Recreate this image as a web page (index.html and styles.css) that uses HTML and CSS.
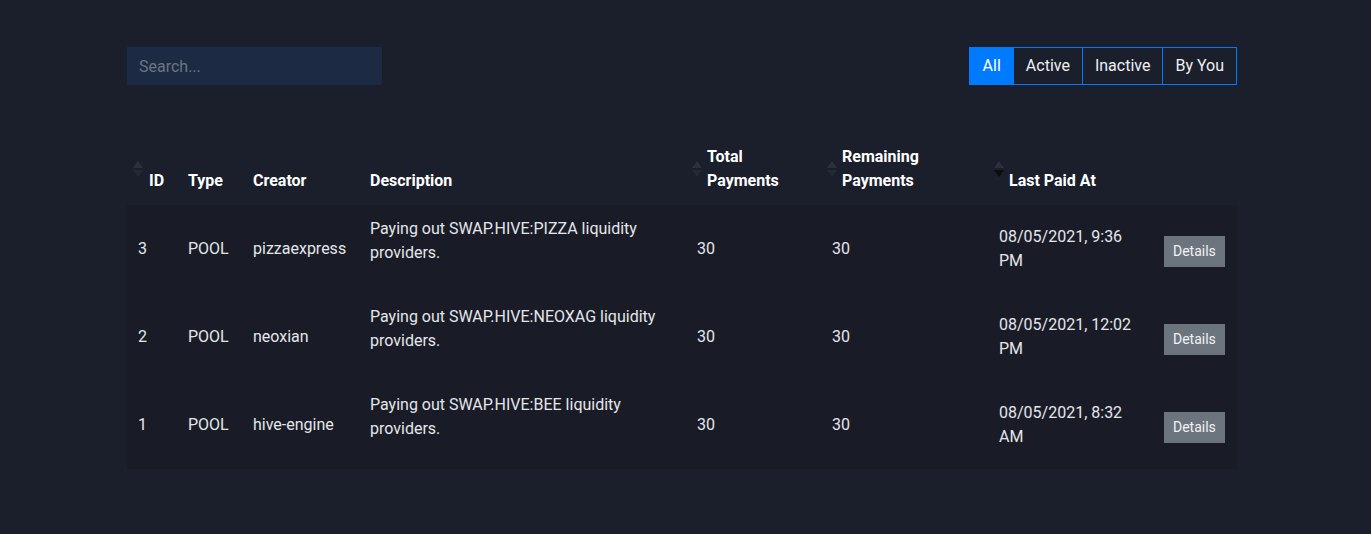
FILE: index.html
```html
<!DOCTYPE html>
<html lang="en">
<head>
<meta charset="utf-8">
<title>Distributions</title>
<link rel="stylesheet" href="styles.css">
</head>
<body>
<div class="page">
  <div class="toolbar">
    <input class="search" type="text" placeholder="Search...">
    <div class="btn-group">
      <button class="filter active">All</button>
      <button class="filter">Active</button>
      <button class="filter">Inactive</button>
      <button class="filter">By You</button>
    </div>
  </div>

  <table class="table">
    <colgroup>
      <col class="c-id"><col class="c-type"><col class="c-creator"><col class="c-desc">
      <col class="c-total"><col class="c-remain"><col class="c-last"><col class="c-action">
    </colgroup>
    <thead>
      <tr>
        <th class="sortable first"><svg class="sort" viewBox="0 0 10 16"><path class="up" d="M5 0 L10 7 L0 7 Z"/><path class="down" d="M0 9 L10 9 L5 16 Z"/></svg>ID</th>
        <th>Type</th>
        <th>Creator</th>
        <th>Description</th>
        <th class="sortable"><svg class="sort" viewBox="0 0 10 16"><path class="up" d="M5 0 L10 7 L0 7 Z"/><path class="down" d="M0 9 L10 9 L5 16 Z"/></svg>Total Payments</th>
        <th class="sortable"><svg class="sort" viewBox="0 0 10 16"><path class="up" d="M5 0 L10 7 L0 7 Z"/><path class="down" d="M0 9 L10 9 L5 16 Z"/></svg>Remaining Payments</th>
        <th class="sortable"><svg class="sort" viewBox="0 0 10 16"><path class="up" d="M5 0 L10 7 L0 7 Z"/><path class="down on" d="M0 9 L10 9 L5 16 Z"/></svg>Last Paid At</th>
        <th></th>
      </tr>
    </thead>
    <tbody>
      <tr>
        <td>3</td><td>POOL</td><td>pizzaexpress</td>
        <td><p class="desc">Paying out SWAP.HIVE:PIZZA liquidity providers.</p></td>
        <td>30</td><td>30</td><td>08/05/2021, 9:36 PM</td>
        <td><button class="details">Details</button></td>
      </tr>
      <tr>
        <td>2</td><td>POOL</td><td>neoxian</td>
        <td><p class="desc">Paying out SWAP.HIVE:NEOXAG liquidity providers.</p></td>
        <td>30</td><td>30</td><td>08/05/2021, 12:02 PM</td>
        <td><button class="details">Details</button></td>
      </tr>
      <tr>
        <td>1</td><td>POOL</td><td>hive-engine</td>
        <td><p class="desc">Paying out SWAP.HIVE:BEE liquidity providers.</p></td>
        <td>30</td><td>30</td><td>08/05/2021, 8:32 AM</td>
        <td><button class="details">Details</button></td>
      </tr>
    </tbody>
  </table>
</div>
</body>
</html>
```

FILE: styles.css
```css
* { box-sizing: border-box; }

html, body {
  margin: 0;
  background: #1b1f2b;
  color: #e4e6ea;
  font-family: Roboto, "Liberation Sans", Arial, sans-serif;
  font-size: 16px;
  line-height: 24px;
}

.page {
  width: 1237px;
  padding: 47px 0 0 127px;
}

.toolbar {
  display: flex;
  justify-content: space-between;
  align-items: flex-start;
  margin-bottom: 47px;
}

.search {
  width: 255px;
  height: 38px;
  border: 0;
  background: #1c2a44;
  color: #e4e6ea;
  font-family: inherit;
  font-size: 16px;
  padding: 0 12px;
  outline: none;
}
.search::placeholder { color: #6b7582; }

.btn-group {
  display: flex;
}

.filter {
  font-family: inherit;
  font-size: 16px;
  line-height: 24px;
  padding: 6px 12px;
  background: transparent;
  color: #eef0f3;
  border: 1px solid #007bff;
  margin-left: -1px;
  cursor: pointer;
}
.filter:first-child { margin-left: 0; padding-left: 13px; }
.filter.active { background: #007bff; color: #fff; }

.table {
  width: 1110px;
  border-collapse: collapse;
  table-layout: fixed;
}

.c-id { width: 50px; }
.c-type { width: 65px; }
.c-creator { width: 117px; }
.c-desc { width: 327px; }
.c-total { width: 135px; }
.c-remain { width: 167px; }
.c-last { width: 165px; }
.c-action { width: 84px; }

th {
  position: relative;
  text-align: left;
  vertical-align: bottom;
  font-weight: 700;
  color: #fff;
  padding: 13px 12px 12px 11px;
}
th.sortable { padding-left: 21px; }
th.sortable.first { padding-left: 22px; }

.sort {
  position: absolute;
  left: 6px;
  top: 50%;
  margin-top: -8px;
  width: 10px;
  height: 16px;
}
.sort .up { fill: #2b303b; }
.sort .down { fill: #252933; }
.sort .down.on { fill: #0b0d12; }

tbody tr { background: #191c27; }

td {
  vertical-align: middle;
  padding: 12px 12px 12px 11px;
}

.desc { margin: 0 0 16px 0; }

.details {
  display: block;
  margin-top: 5px;
  font-family: inherit;
  font-size: 14px;
  line-height: 21px;
  padding: 5px 9px;
  border: 0;
  background: #6c757d;
  color: #f1f2f4;
  cursor: pointer;
}
```
